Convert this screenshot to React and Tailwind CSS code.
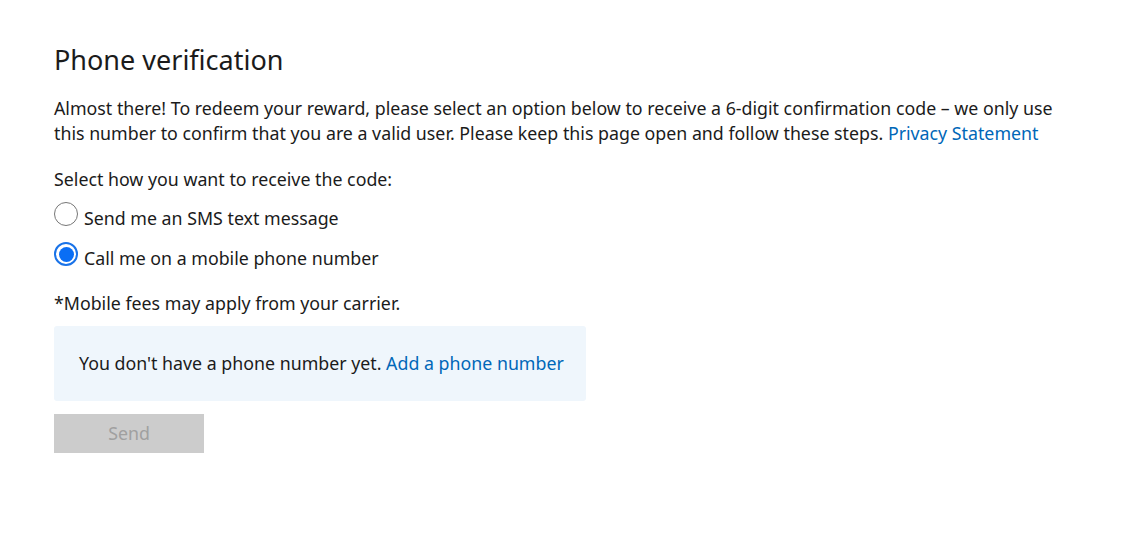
import React, { useState } from 'react';

const Radio = ({ checked, onClick, label }) => (
    <label className="flex items-center h-[40px] cursor-pointer" onClick={onClick}>
        <span
            className={`w-[24px] h-[24px] rounded-full flex items-center justify-center mr-[6px] -mt-[8px] bg-white border ${checked ? 'border-[#1a73e8] border-2' : 'border-[#767676]'}`}
        >
            {checked && <span className="w-[15px] h-[15px] rounded-full bg-[#0a6ef5]" />}
        </span>
        <span className="mt-[1px]">{label}</span>
    </label>
);

const App = () => {
    const [option, setOption] = useState('call');

    return (
        <div className="min-h-[558px] bg-white text-[#1b1b1b] font-['Noto_Sans',sans-serif] text-[17.8px] leading-[25px] pl-[54px] pt-[40px]">
            <h1 className="text-[27px] leading-[40px] font-normal text-[#1b1b1b] mb-[16px]">Phone verification</h1>

            <p className="w-[1020px] mb-[21px]">
                Almost there! To redeem your reward, please select an option below to receive a 6-digit confirmation code – we only use this number to confirm that you are a valid user. Please keep this page open and follow these steps.{' '}
                <a href="#" className="text-[#0067b8]">Privacy Statement</a>
            </p>

            <p className="mb-[6px]">Select how you want to receive the code:</p>

            <Radio checked={option === 'sms'} onClick={() => setOption('sms')} label="Send me an SMS text message" />
            <Radio checked={option === 'call'} onClick={() => setOption('call')} label="Call me on a mobile phone number" />

            <p className="mt-[13px] mb-[10px]">*Mobile fees may apply from your carrier.</p>

            <div className="w-[532px] h-[75px] bg-[#eff6fc] rounded-[3px] flex items-center px-[25px]">
                <span className="whitespace-nowrap">
                    You don't have a phone number yet.{' '}
                    <a href="#" className="text-[#0067b8]">Add a phone number</a>
                </span>
            </div>

            <button
                disabled
                className="mt-[13px] w-[150px] h-[39px] bg-[#cccccc] text-[#a0a0a0] text-[17.8px] font-['Noto_Sans',sans-serif]"
            >
                Send
            </button>
        </div>
    );
};

export default App;
